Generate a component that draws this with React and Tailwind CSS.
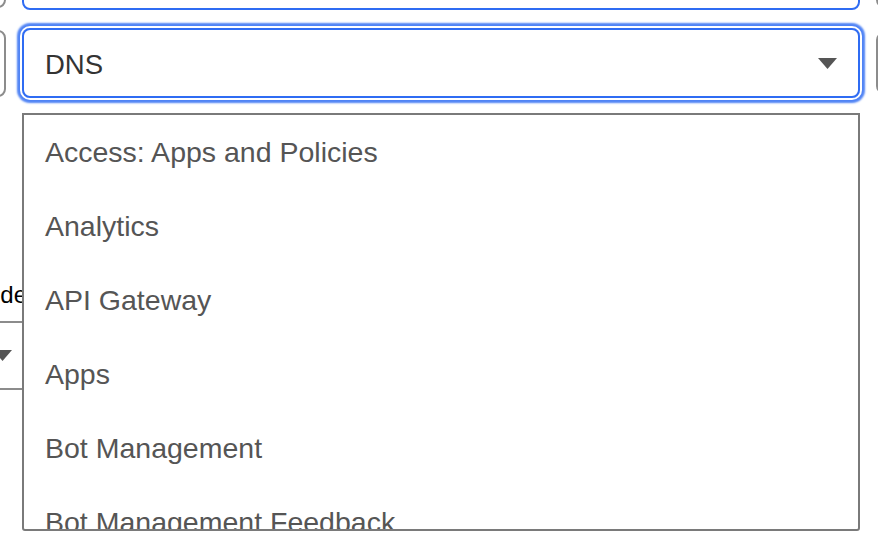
const services = [
  'Access: Apps and Policies',
  'Analytics',
  'API Gateway',
  'Apps',
  'Bot Management',
  'Bot Management Feedback',
  'Cache',
];

function Caret({ className }) {
  return (
    <svg width="19" height="11" viewBox="0 0 19 11" className={className}>
      <polygon points="0,0 19,0 9.5,11" fill="#555555" />
    </svg>
  );
}

export default function App() {
  return (
    <div className="relative w-[878px] h-[556px] overflow-hidden bg-white font-['Liberation_Sans',Arial,sans-serif]">
      {/* form grid, scrolled so only the middle column is fully visible */}
      <div className="-ml-[40px] -mt-[60px] grid grid-cols-[46px_838px_120px] gap-x-4 gap-y-[18px]">
        <div className="h-[68px] rounded-lg border-2 border-[#8c8c8c]" />
        <div className="h-[70px] rounded-lg border-2 border-[#2f6cf3]" />
        <div className="h-[68px] rounded-lg border-2 border-[#8c8c8c]" />

        <div className="mt-[2px] h-[67px] rounded-lg border-2 border-[#8c8c8c]" />
        <div className="h-[70px] rounded-lg border-2 border-[#2f6cf3] shadow-[0_0_0_2px_#ffffff,0_0_2px_5px_#4f83f5] flex items-center justify-between pl-[21px] pr-[21px]">
          <span className="pt-[4px] text-[27.5px] text-[#333333]">DNS</span>
          <Caret />
        </div>
        <div className="mt-[4px] h-[62px] rounded-lg border-2 border-[#8c8c8c]" />
      </div>

      {/* field below, mostly hidden behind the open list */}
      <div className="mt-[183px] -ml-[33px] w-[68px]">
        <div className="text-[24px] leading-[28px] text-black whitespace-nowrap">Mode</div>
        <div className="mt-[12px] h-[69px] border-y-2 border-[#8c8c8c] flex items-center justify-end pr-[23px]">
          <Caret />
        </div>
      </div>

      {/* open dropdown list */}
      <ul className="absolute left-[22px] top-[113px] w-[838px] h-[418px] overflow-hidden rounded-b-[3px] border-2 border-[#7a7a7a] bg-white">
        {services.map((s) => (
          <li key={s} className="pl-[21px] text-[28.5px] leading-[74px] text-[#555555] whitespace-nowrap">
            {s}
          </li>
        ))}
      </ul>
    </div>
  );
}
